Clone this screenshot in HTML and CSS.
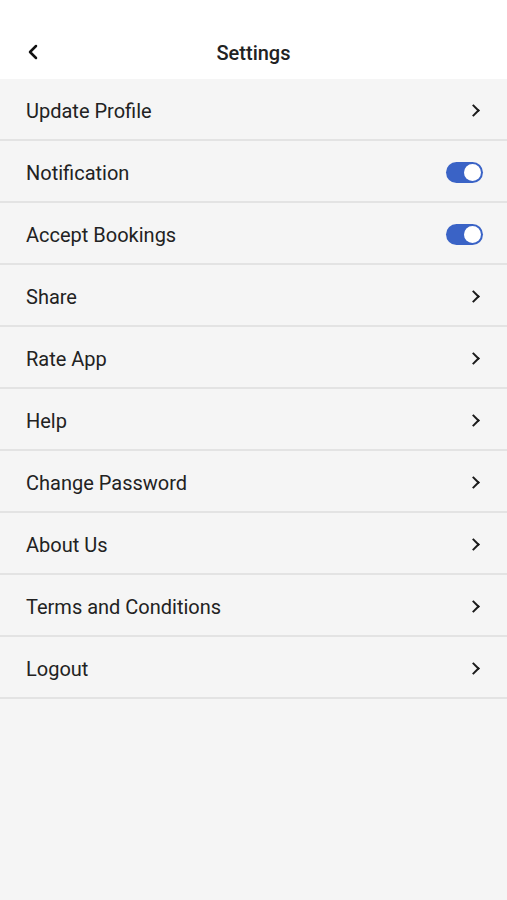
FILE: index.html
```html
<!DOCTYPE html>
<html lang="en">
<head>
  <meta charset="UTF-8">
  <meta name="viewport" content="width=device-width, initial-scale=1.0">
  <title>Settings</title>
  <link rel="stylesheet" href="styles.css">
</head>
<body>
  <header class="topbar">
    <button class="back" aria-label="Back">
      <svg width="14" height="16" viewBox="0 0 14 16"><path d="M10 2 L4 8 L10 14" fill="none" stroke="#111" stroke-width="2.5" stroke-linecap="round" stroke-linejoin="round"/></svg>
    </button>
    <h1>Settings</h1>
  </header>

  <ul class="menu">
    <li class="item"><span>Update Profile</span><i class="chev"></i></li>
    <li class="item"><span>Notification</span><span class="toggle on"></span></li>
    <li class="item"><span>Accept Bookings</span><span class="toggle on"></span></li>
    <li class="item"><span>Share</span><i class="chev"></i></li>
    <li class="item"><span>Rate App</span><i class="chev"></i></li>
    <li class="item"><span>Help</span><i class="chev"></i></li>
    <li class="item"><span>Change Password</span><i class="chev"></i></li>
    <li class="item"><span>About Us</span><i class="chev"></i></li>
    <li class="item"><span>Terms and Conditions</span><i class="chev"></i></li>
    <li class="item"><span>Logout</span><i class="chev"></i></li>
  </ul>
</body>
</html>
```

FILE: styles.css
```css
/* Global */
body {
  margin: 0;
  font-family: Roboto, "Noto Sans", sans-serif;
  background: #f5f5f5;
  color: #1c1c1c;
  min-height: 900px;
}

/* Header */
.topbar {
  position: relative;
  height: 79px;
  box-sizing: border-box;
  padding-top: 26px;
  background: #ffffff;
  display: flex;
  align-items: center;
  justify-content: center;
}

.topbar h1 {
  margin: 0;
  font-size: 20px;
  font-weight: 500;
  color: #222222;
}

.back {
  position: absolute;
  left: 26px;
  top: 44px;
  padding: 0;
  border: none;
  background: none;
  display: flex;
}

/* Menu */
.menu {
  list-style: none;
  margin: 0;
  padding: 0;
}

.item {
  height: 62px;
  box-sizing: border-box;
  display: flex;
  align-items: center;
  justify-content: space-between;
  padding: 3px 25px 0 26px;
  border-bottom: 2px solid #e3e3e3;
  font-size: 20px;
  color: #222222;
}

.item > span:first-child {
  padding-top: 1px;
}

.chev {
  width: 7px;
  height: 7px;
  border-top: 2.3px solid #1a1a1a;
  border-right: 2.3px solid #1a1a1a;
  transform: rotate(45deg);
  margin-right: 4px;
}

/* Toggle */
.toggle {
  position: relative;
  width: 37px;
  height: 21px;
  border-radius: 11px;
  background: #3a63c6;
  margin-right: -1px;
}

.toggle::after {
  content: "";
  position: absolute;
  top: 2px;
  right: 2px;
  width: 17px;
  height: 17px;
  border-radius: 50%;
  background: #ffffff;
}
```
